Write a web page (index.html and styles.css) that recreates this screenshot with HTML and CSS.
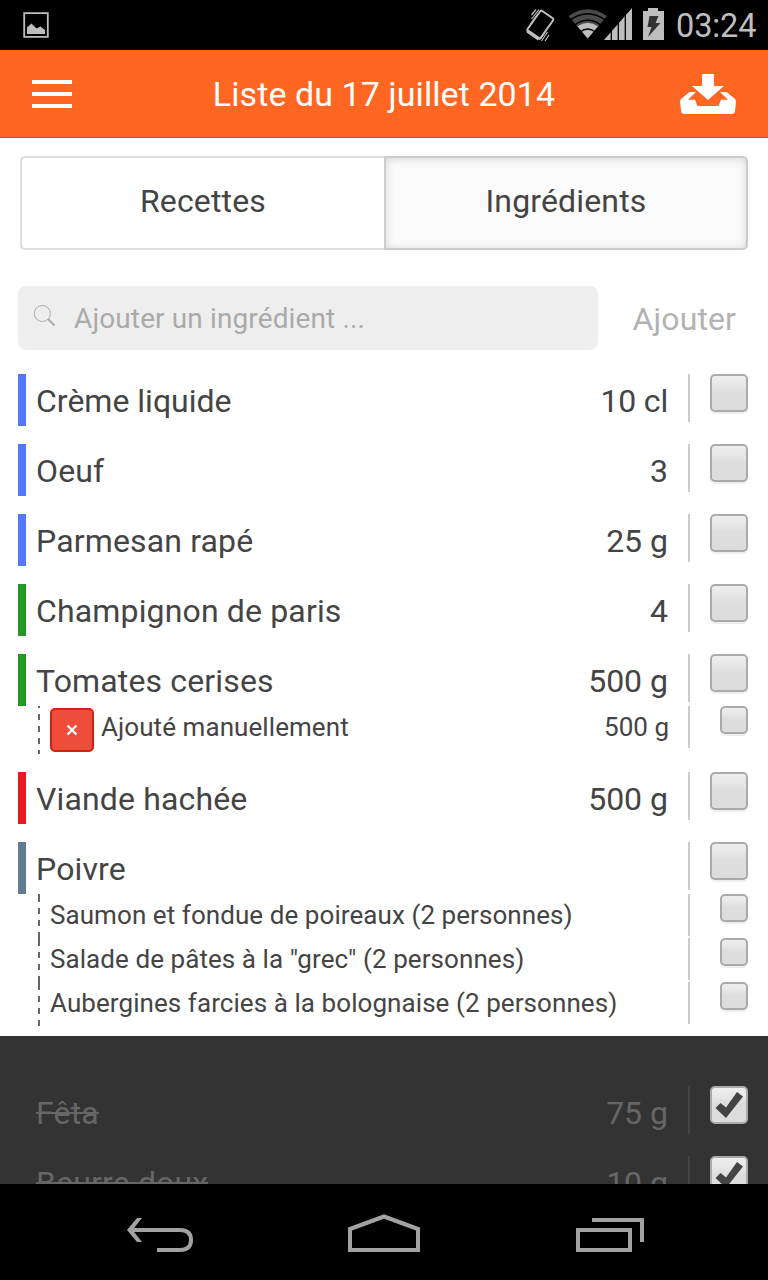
FILE: index.html
```html
<!DOCTYPE html>
<html lang="fr">
<head>
<meta charset="utf-8">
<title>Liste du 17 juillet 2014</title>
<link rel="stylesheet" href="styles.css">
</head>
<body>
<div class="screen">
  <div class="status">
    <svg class="status-left" width="26" height="26" viewBox="0 0 26 26"><path d="M1.200 1.200h23.600v23.600H1.200z" fill="none" stroke="#bebebe" stroke-width="1.800"/><path d="M4 15.500l4.500-4 5 5 4-2 4.500 3.500v4H4z" fill="#bebebe"/></svg>
    <div class="status-right">
      <svg width="142" height="36" viewBox="0 0 142 36">
        <g fill="none" stroke="#bebebe">
          <path d="M17.500 3.500L29 11.500Q29.700 12.500 29 13.500L16.500 31Q15.500 32 14 31L4 24.500Q2.800 23.500 3.600 22L16 4.500Q16.800 3.200 17.500 3.500Z" stroke-width="2"/>
          <path d="M3.500 24l11.500 8" stroke-width="3.500"/>
          <path d="M7.500 8L12 2.500M7.500 12L15 2.500M6.500 17L13 8M17.500 34l6-9M21 34l4-6M15.500 33l5-7" stroke-width="1.200"/>
        </g>
        <path d="M63.700 31.500L44.500 9Q63.700-4.500 83 9Z" fill="#4b4b4b"/>
        <path d="M63.700 31.500L53.500 19.300Q63.700 12 74 19.300Z" fill="#bebebe"/>
        <path d="M45.500 14.500Q63.700 1 82 14.500M50 19.500Q63.700 9 77.500 19.500M56 26Q63.700 20 71.500 26" transform="translate(0 -1)" fill="none" stroke="#000" stroke-width="1.300"/>
        <path d="M80 33L108 1V33Z" fill="#bebebe"/>
        <path d="M87.300 1v32M94.300 1v32M101.300 1v32" stroke="#000" stroke-width="1.300"/>
        <path d="M119 4h5V1h10v3h6v29h-21z" fill="#bebebe"/>
        <path d="M125.500 9h9l-3 7h5l-12.500 14 3.500-10h-4z" fill="#333"/>
      </svg>
      <span class="clock">03:24</span>
    </div>
  </div>
  <header class="bar">
    <div class="menu"><i></i><i></i><i></i></div>
    <h1>Liste du 17 juillet 2014</h1>
    <svg class="save" width="56" height="40" viewBox="0 0 56 40" fill="#fff"><path d="M22 0h12v12h10L28 26 12 12h10z"/><path d="M9.500 18H16L8 25.700H15L17.500 32H38.500L41 25.700H48L40 18H46.500L55 25Q56 26 56 27.500L55 37.500Q54.700 40 52 40H4Q1.500 40 1.200 37.500L0 27.500Q0 26 1 25Z"/></svg>
  </header>
  <main>
    <div class="tabs"><div class="tab">Recettes</div><div class="tab active">Ingrédients</div></div>
    <div class="add">
      <div class="field"><svg width="24" height="24" viewBox="0 0 24 24" fill="none" stroke="#aaa"><circle cx="9.300" cy="9.500" r="8" stroke-width="1"/><path d="M15 15l6.500 6.500" stroke-width="2"/></svg><span>Ajouter un ingrédient ...</span></div>
      <span class="add-button">Ajouter</span>
    </div>
    <div class="list">
      <div class="item dairy"><div class="row"><span class="name tight">Crème liquide</span><span class="qty tight">10 cl</span><span class="cell"><i class="box"></i></span></div></div>
      <div class="item dairy"><div class="row"><span class="name">Oeuf</span><span class="qty">3</span><span class="cell"><i class="box"></i></span></div></div>
      <div class="item dairy"><div class="row"><span class="name">Parmesan rapé</span><span class="qty">25 g</span><span class="cell"><i class="box"></i></span></div></div>
      <div class="item veg"><div class="row"><span class="name">Champignon de paris</span><span class="qty">4</span><span class="cell"><i class="box"></i></span></div></div>
      <div class="item veg"><div class="row"><span class="name">Tomates cerises</span><span class="qty">500 g</span><span class="cell"><i class="box"></i></span></div>
        <div class="sub manual"><span class="remove"><svg width="12" height="12" viewBox="0 0 12 12"><path d="M1.500 1.500l9 9M10.500 1.500l-9 9" stroke="#fff" stroke-width="2.200"/></svg></span><span class="name">Ajouté manuellement</span><span class="qty">500 g</span><span class="cell"><i class="box"></i></span></div>
      </div>
      <div class="item meat"><div class="row"><span class="name">Viande hachée</span><span class="qty">500 g</span><span class="cell"><i class="box"></i></span></div></div>
      <div class="item spice"><div class="row"><span class="name">Poivre</span><span class="cell"><i class="box"></i></span></div>
        <div class="sub"><span class="name">Saumon et fondue de poireaux (2 personnes)</span><span class="cell"><i class="box"></i></span></div>
        <div class="sub"><span class="name">Salade de pâtes à la "grec" (2 personnes)</span><span class="cell"><i class="box"></i></span></div>
        <div class="sub"><span class="name">Aubergines farcies à la bolognaise (2 personnes)</span><span class="cell"><i class="box"></i></span></div>
      </div>
    </div>
    <div class="done">
      <div class="item"><div class="row"><span class="name"><s>Fêta</s></span><span class="qty">75 g</span><span class="cell"><i class="box"><svg width="34" height="34" viewBox="0 0 34 34"><path d="M3.500 20l5-5 5.500 4.500L25 4l6 4.500L14 30z" fill="#444"/></svg></i></span></div></div>
      <div class="item"><div class="row"><span class="name"><s>Beurre doux</s></span><span class="qty">10 g</span><span class="cell"><i class="box"><svg width="34" height="34" viewBox="0 0 34 34"><path d="M3.500 20l5-5 5.500 4.500L25 4l6 4.500L14 30z" fill="#444"/></svg></i></span></div></div>
    </div>
  </main>
  <nav class="nav">
    <svg width="68" height="36" viewBox="0 0 68 36" fill="none" stroke="#a2a2a2" stroke-width="4"><path d="M4 14H54Q65 14 65 24T54 34H31"/><path d="M11 2h5L6.500 14 16 26h-5L1 14z" fill="#a2a2a2" stroke="none"/></svg>
    <svg class="home" width="72" height="38" viewBox="0 0 72 38" fill="none" stroke="#a2a2a2" stroke-width="4"><path d="M2 36V15L36 2.500 70 15V36Z"/></svg>
    <svg width="68" height="34" viewBox="0 0 68 34" fill="none" stroke="#a2a2a2" stroke-width="4"><path d="M2 12H54V32H2ZM16 2H66V24"/></svg>
  </nav>
</div>
</body>
</html>
```
FILE: styles.css
```css
* { box-sizing: border-box; }
body { margin: 0; background: #000; font-family: Roboto, "Liberation Sans", sans-serif; color: #444; }
.screen { width: 768px; height: 1280px; overflow: hidden; display: flex; flex-direction: column; background: #fff; }
.status { height: 50px; flex: none; background: #000; display: flex; justify-content: space-between; padding: 0 12px 0 23px; }
.status-left { margin-top: 12px; }
.status-right { display: flex; gap: 10px; padding-top: 7px; }
.clock { color: #bebebe; font-size: 32.5px; line-height: 39px; width: 80px; white-space: nowrap; letter-spacing: -.1px; }
.bar { height: 88px; flex: none; background: #ff6622; border-bottom: 1px solid #dd4400; display: flex; justify-content: space-between; padding: 24px 32px 0; }
.menu { width: 56px; padding-top: 6px; display: flex; flex-direction: column; gap: 8px; }
.menu i { width: 40px; height: 4px; background: #fff; }
.bar h1 { margin: 0; color: #fff; font-weight: 400; font-size: 34px; line-height: 40px; white-space: nowrap; letter-spacing: .08px; }
main { flex: 1; min-height: 0; overflow: hidden; display: flex; flex-direction: column; }
.tabs { flex: none; display: grid; grid-template-columns: 364px 364px; height: 94px; margin: 18px 20px 0; }
.tab { border: 2px solid #ddd; border-right: 0; border-radius: 5px 0 0 5px; text-align: center; font-size: 32px; line-height: 86px; letter-spacing: .15px; }
.tab.active { background: #fafafa; border: 2px solid #ccc; border-radius: 0 5px 5px 0; box-shadow: inset 0 1px 8px rgba(0, 0, 0, .15); }
.add { flex: none; display: flex; height: 64px; margin: 36px 32px 0 18px; justify-content: space-between; }
.field { width: 580px; background: #eee; border-radius: 8px; display: flex; padding: 18px 15px; font-size: 28px; line-height: 30px; color: #aaa; }
.field span { margin-left: 17px; letter-spacing: .12px; }
.add-button { font-size: 32px; line-height: 66px; color: #b2b2b2; letter-spacing: .1px; }
.list { flex: none; padding: 24px 20px 10px 18px; display: flex; flex-direction: column; gap: 18px; }
.row { height: 52px; display: flex; padding-left: 10px; border-left: 8px solid transparent; font-size: 32px; line-height: 54px; white-space: nowrap; }
.dairy .row { border-color: #5577ff; }
.veg .row { border-color: #229922; }
.meat .row { border-color: #e61a22; }
.spice .row { border-color: #5f7d8c; }
.name { flex: 1; letter-spacing: .15px; }
.tight { letter-spacing: 0; }
.qty { padding-right: 20px; }
.qty.tight { letter-spacing: -.2px; }
.cell { width: 60px; height: 48px; border-left: 2px solid #ccc; display: flex; justify-content: flex-end; }
.box { width: 38px; height: 38px; border: 2px solid #aaa; border-radius: 5px; background: linear-gradient(#eee, #e9e9e9 20%, #ddd 48%, #ddd); box-shadow: 0 2px 0 #eee; }
.box svg { display: block; }
.sub { height: 44px; margin-left: 20px; padding-left: 12px; display: flex; font-size: 26px; line-height: 42px; white-space: nowrap; background: repeating-linear-gradient(#666 0 2px, transparent 2px 8px, #666 8px 12px) 0 0 / 2px 100% no-repeat; }
.spice .sub { background-image: linear-gradient(#666 0 2px, transparent 2px), repeating-linear-gradient(transparent 0 2px, #666 2px 8px, transparent 8px 12px); background-position: 0 0; background-size: 2px 100%; }
.sub .cell { height: 42px; }
.sub .box { width: 28px; height: 28px; }
.sub .name { letter-spacing: .07px; }
.manual { height: 48px; }
.manual .qty { padding-right: 19px; }
.remove { width: 44px; height: 44px; margin: 2px 7px 0 0; background: #ee4d3b; border: 2px solid #cc2211; border-radius: 5px; display: flex; align-items: center; justify-content: center; }
.done { flex: 1; min-height: 0; overflow: hidden; background: #333; color: #666; padding: 50px 20px 0 18px; display: flex; flex-direction: column; gap: 18px; }
.done .cell { border-color: #444; }
.done .box { box-shadow: none; }
.done s { display: inline-block; text-decoration: none; background: linear-gradient(#666, #666) 0 26px / 100% 2px no-repeat; }
.nav { height: 96px; flex: none; background: #000; display: grid; grid-template-columns: 68px 72px 68px; column-gap: 154px; padding: 0 0 28px 126px; align-items: end; }
.nav { grid-template-columns: 222px 228px 68px; column-gap: 0; }
```
